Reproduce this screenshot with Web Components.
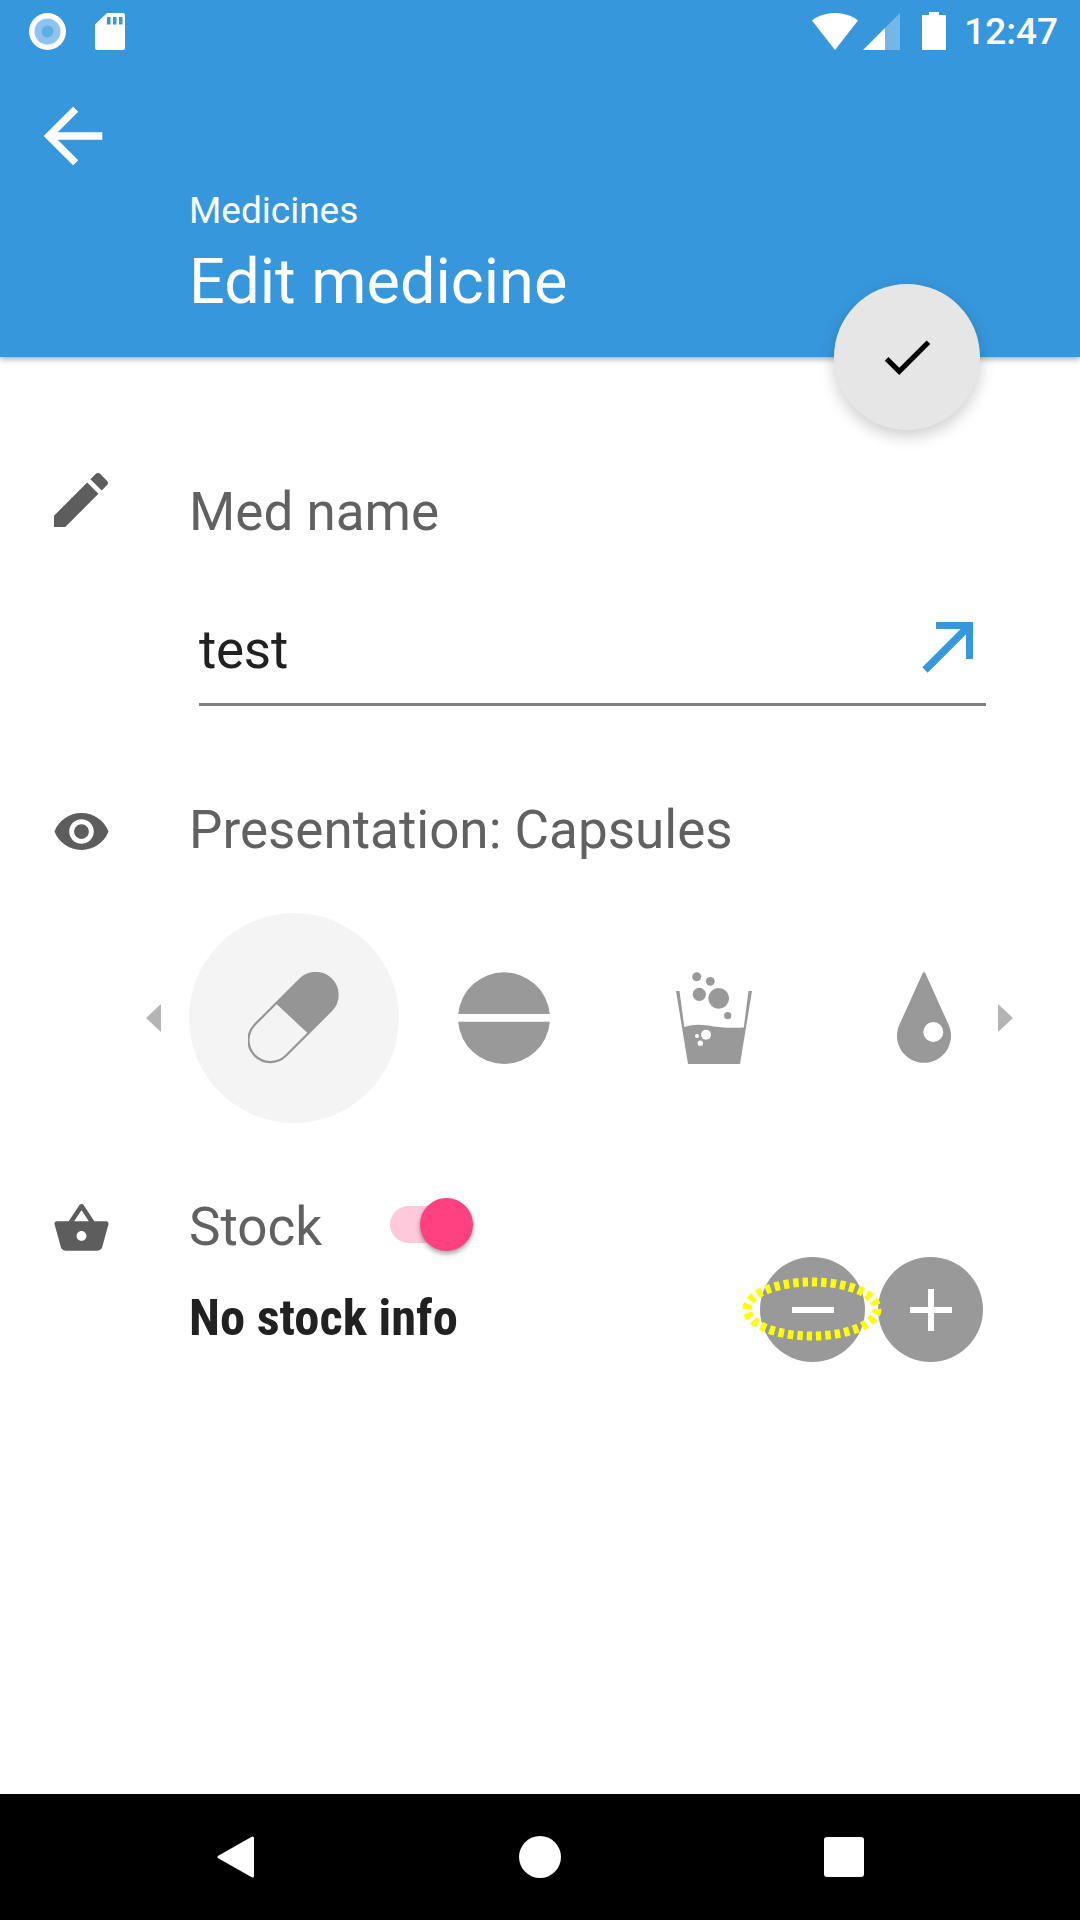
<!DOCTYPE html>
<html>
<head>
<meta charset="utf-8">
<style>
  html, body { margin: 0; padding: 0; background: #fff; }
  body { font-family: Roboto, "Liberation Sans", sans-serif; }
</style>
</head>
<body>
<edit-medicine-page></edit-medicine-page>
<script>
class statusBar extends HTMLElement {
    constructor() {
        super();
        this.attachShadow({mode: 'open'});
    }
    connectedCallback() {
        this.shadowRoot.innerHTML = `
        <style>
            :host { display: flex; height: 72px; box-sizing: border-box; padding: 12px 22px 0 29px; color: #fff; }
            svg { display: block; flex: none; }
            .sd { margin-left: 29px; margin-top: 1px; }
            .right { margin-left: auto; display: flex; }
            .signal { margin-left: 5px; margin-top: 1px; }
            .battery { margin-left: 22.500px; }
            .wifi { margin-top: 1px; }
            .time { margin-left: 18px; font: 500 37px/42px Roboto, sans-serif; margin-top: -1px; }
            .rec { margin-top: 1px; }
        </style>
        <svg class="rec" width="37" height="37" viewBox="0 0 37 37">
            <circle cx="18.500" cy="18.500" r="18.500" fill="#fff"/>
            <circle cx="18.500" cy="18.500" r="13" fill="#8dc3ee"/>
            <circle cx="18.500" cy="18.500" r="6" fill="#62ade6"/>
        </svg>
        <svg class="sd" width="30" height="37" viewBox="0 0 30 37">
            <path fill="#fff" d="M12 0h15.500a2.500 2.500 0 0 1 2.500 2.500v32a2.500 2.500 0 0 1-2.500 2.500h-25a2.500 2.500 0 0 1-2.500-2.500v-23z"/>
            <path fill="#3797dc" d="M12 4h3.500v7.500h-3.500zM18 4h3.500v7.500h-3.500zM24 4h3.500v7.500h-3.500z"/>
        </svg>
        <div class="right">
            <svg class="wifi" width="46" height="37" viewBox="0 0 46 37">
                <path fill="#fff" d="M23 37L0 7.500C6 2.800 14 0 23 0s17 2.800 23 7.500z"/>
            </svg>
            <svg class="signal" width="37" height="37" viewBox="0 0 37 37">
                <path fill="#75b6e8" d="M37 0v37H22V15z"/>
                <path fill="#fff" d="M22 15v22H0z"/>
            </svg>
            <svg class="battery" width="24" height="38" viewBox="0 0 24 38">
                <path fill="#fff" d="M7 0h10v3h7v35H0V3h7z"/>
            </svg>
            <div class="time">12:47</div>
        </div>
        `;
    }
}
customElements.define("status-bar", statusBar);

class appHeader extends HTMLElement {
    constructor() {
        super();
        this.attachShadow({mode: 'open'});
    }
    connectedCallback() {
        this.shadowRoot.innerHTML = `
        <style>
            :host {
                display: block;
                position: relative;
                height: 357px;
                background: #3797dc;
                color: #fff;
                box-shadow: 0 2px 6px rgba(0,0,0,.35);
                z-index: 1;
            }
            .back { display: block; margin: 20px 0 0 29px; }
            .titles { padding-left: 189px; margin-top: 10px; }
            .sub { font-size: 37px; line-height: 42px; }
            .title { font-size: 63px; line-height: 76px; margin-top: 12px; }
            .fab {
                position: absolute;
                left: 834px;
                top: 284px;
                width: 146px;
                height: 146px;
                border-radius: 50%;
                background: #e6e6e6;
                display: flex;
                align-items: center;
                justify-content: center;
                box-shadow: 0 6px 16px rgba(0,0,0,.2);
            }
        </style>
        <status-bar></status-bar>
        <svg class="back" width="88" height="88" viewBox="0 0 24 24">
            <path fill="#fff" d="M20 11H7.830l5.590-5.590L12 4l-8 8 8 8 1.410-1.410L7.830 13H20v-2z"/>
        </svg>
        <div class="titles">
            <div class="sub">Medicines</div>
            <div class="title">Edit medicine</div>
        </div>
        <div class="fab">
            <svg width="62" height="62" viewBox="0 0 24 24">
                <path fill="#000" d="M9 16.170L4.830 12l-1.420 1.410L9 19 21 7l-1.410-1.410z"/>
            </svg>
        </div>
        `;
    }
}
customElements.define("app-header", appHeader);

// one row of the form: icon on the left, label text in the slot
class formRow extends HTMLElement {
    constructor() {
        super();
        this.attachShadow({mode: 'open'});
    }
    connectedCallback() {
        this.shadowRoot.innerHTML = `
        <style>
            :host { display: flex; align-items: flex-start; height: 64px; }
            .icon { width: 72px; flex: none; margin-left: 45px; margin-right: 72px; display: flex; justify-content: center; }
            .label { font-size: 53px; line-height: 64px; color: #616161; display: flex; align-items: flex-start; }
            ::slotted(svg) { display: block; flex: none; }
        </style>
        <div class="icon"><slot name="icon"></slot></div>
        <div class="label"><slot></slot></div>
        `;
    }
}
customElements.define("form-row", formRow);

class nameField extends HTMLElement {
    constructor() {
        super();
        this.attachShadow({mode: 'open'});
    }
    connectedCallback() {
        this.shadowRoot.innerHTML = `
        <style>
            :host {
                display: flex;
                justify-content: space-between;
                margin: 74px 94px 0 199px;
                padding: 0 13px 21px 0;
                border-bottom: 3px solid #808080;
                color: #212121;
                font-size: 53px;
                letter-spacing: -.3px;
                line-height: 64px;
            }
            svg { display: block; margin-top: 4px; }
        </style>
        <div>test</div>
        <svg width="51" height="51" viewBox="922 622 51 51">
            <path fill="none" stroke="#3797dc" stroke-width="7" d="M936 625.500H969.500V659"/>
            <path fill="none" stroke="#3797dc" stroke-width="7.500" d="M968 627L925 670"/>
        </svg>
        `;
    }
}
customElements.define("name-field", nameField);

class presentationPicker extends HTMLElement {
    constructor() {
        super();
        this.attachShadow({mode: 'open'});
    }
    connectedCallback() {
        this.shadowRoot.innerHTML = `
        <style>
            :host { display: flex; position: relative; margin-top: 51px; padding-left: 189px; height: 210px; }
            .item { width: 210px; height: 210px; flex: none; display: flex; align-items: center; justify-content: center; border-radius: 50%; }
            .selected { background: #f4f4f4; }
            svg { display: block; }
            .chev { position: absolute; top: 91px; }
            .prev { left: 146px; }
            .next { left: 998px; }
        </style>
        <svg class="chev prev" width="15" height="28" viewBox="0 0 15 28"><path fill="#b4b4b4" d="M15 0V28L0 14z"/></svg>
        <div class="item selected">
            <svg width="92" height="92" viewBox="0 0 92 92">
                <path fill="none" stroke="#959595" stroke-width="2.200" d="M52.450 6.950L6.450 52.950A22 22 0 0 0 37.550 84.050L83.550 38.050A22 22 0 0 0 52.450 6.950Z"/>
                <path fill="#959595" d="M28 31.400L52.450 6.950A22 22 0 0 1 83.550 38.050L60 61.600Z"/>
            </svg>
        </div>
        <div class="item">
            <svg width="92" height="92" viewBox="0 0 92 92">
                <path fill="#999" d="M.2 42A46 46 0 0 1 91.800 42ZM91.850 49.700A46 46 0 0 1 .15 49.700Z"/>
            </svg>
        </div>
        <div class="item">
            <svg width="76" height="92" viewBox="676 972 76 92">
                <g fill="#999">
                    <circle cx="696.700" cy="976.700" r="4.500"/>
                    <circle cx="710.300" cy="981.300" r="4.400"/>
                    <circle cx="699.300" cy="994.300" r="6.600"/>
                    <circle cx="718.700" cy="998.300" r="10.400"/>
                    <circle cx="727.700" cy="1015.700" r="3.600"/>
                    <path d="M676 991H679.500L684.300 1027C695 1023.500 703 1024.500 714 1026.500C724 1028 734 1028 743.800 1027.500L748.500 991H752L740 1064H688Z"/>
                </g>
                <g fill="#fff">
                    <circle cx="706" cy="1034.700" r="5"/>
                    <circle cx="697" cy="1036" r="2"/>
                    <circle cx="700.300" cy="1043.300" r="2.700"/>
                </g>
            </svg>
        </div>
        <div class="item">
            <svg width="54" height="92" viewBox="897 972 54 92">
                <path fill="#999" fill-rule="evenodd" d="M922.500 973.500Q924 971 925.500 973.500L948.500 1024.500A27 27 0 1 1 899.500 1024.500ZM933.300 1022A10 10 0 1 0 933.300 1042A10 10 0 1 0 933.300 1022Z"/>
            </svg>
        </div>
        <svg class="chev next" width="15" height="28" viewBox="0 0 15 28"><path fill="#b4b4b4" d="M0 0V28L15 14z"/></svg>
        `;
    }
}
customElements.define("presentation-picker", presentationPicker);

class stockSwitch extends HTMLElement {
    constructor() {
        super();
        this.attachShadow({mode: 'open'});
    }
    connectedCallback() {
        this.shadowRoot.innerHTML = `
        <style>
            :host { display: block; position: relative; width: 70px; height: 37px; margin-top: 11px; border-radius: 19px; background: #ffc9dc; }
            .thumb {
                position: absolute;
                left: 30px;
                top: -8px;
                width: 53px;
                height: 53px;
                border-radius: 50%;
                background: #ff4081;
                box-shadow: 0 3px 5px rgba(0,0,0,.35);
            }
        </style>
        <div class="thumb"></div>
        `;
    }
}
customElements.define("stock-switch", stockSwitch);

class stockInfo extends HTMLElement {
    constructor() {
        super();
        this.attachShadow({mode: 'open'});
    }
    connectedCallback() {
        this.shadowRoot.innerHTML = `
        <style>
            :host { display: flex; justify-content: space-between; padding: 0 97px 0 189px; margin-top: -2px; }
            .info {
                font-weight: 700;
                font-size: 50.500px;
                line-height: 64px;
                color: #212121;
                margin-top: 29px;
                font-stretch: condensed;
                white-space: nowrap;
            }
            .buttons { display: flex; gap: 13px; position: relative; }
            .btn { width: 105px; height: 105px; border-radius: 50%; background: #999; display: flex; align-items: center; justify-content: center; }
            .btn svg { display: block; }
            .focus { position: absolute; left: -18px; top: 20px; pointer-events: none; }
        </style>
        <div class="info">No stock info</div>
        <div class="buttons">
            <div class="btn"><svg width="42" height="42" viewBox="0 0 42 42"><path fill="#fff" d="M0 18h42v6H0z"/></svg></div>
            <div class="btn"><svg width="42" height="42" viewBox="0 0 42 42"><path fill="#fff" d="M0 18h42v6H0zM18 0h6v42h-6z"/></svg></div>
            <svg class="focus" width="140" height="64" viewBox="0 0 140 64">
                <ellipse cx="70" cy="32" rx="65" ry="27" fill="none" stroke="#ffff00" stroke-width="9" stroke-dasharray="5.400 4"/>
            </svg>
        </div>
        `;
    }
}
customElements.define("stock-info", stockInfo);

class navBar extends HTMLElement {
    constructor() {
        super();
        this.attachShadow({mode: 'open'});
    }
    connectedCallback() {
        this.shadowRoot.innerHTML = `
        <style>
            :host { display: flex; align-items: center; justify-content: space-between; height: 126px; padding: 0 216px 0 217px; background: #000; }
            svg { display: block; }
        </style>
        <svg width="38" height="42" viewBox="0 0 38 42"><path fill="#fff" stroke="#fff" stroke-width="3" stroke-linejoin="round" d="M35.500 2V40L2 21z"/></svg>
        <svg width="42" height="42" viewBox="0 0 42 42"><circle cx="21" cy="21" r="21" fill="#fff"/></svg>
        <svg width="40" height="40" viewBox="0 0 40 40"><rect width="40" height="40" rx="3" fill="#fff"/></svg>
        `;
    }
}
customElements.define("nav-bar", navBar);

class editMedicinePage extends HTMLElement {
    constructor() {
        super();
        this.attachShadow({mode: 'open'});
    }
    connectedCallback() {
        this.shadowRoot.innerHTML = `
        <style>
            :host { display: flex; flex-direction: column; width: 1080px; height: 1920px; overflow: hidden; background: #fff; }
            main { flex: 1; padding-top: 123px; }
            .presentation { margin-top: 92px; }
            .stock { margin-top: 72px; }
        </style>
        <app-header></app-header>
        <main>
            <form-row>
                <svg slot="icon" width="72" height="72" viewBox="0 0 24 24" style="margin-top:-16px">
                    <path fill="#5d5d5d" d="M3 17.250V21h3.750L17.810 9.940l-3.750-3.750L3 17.250zM20.710 7.040c.39-.39.39-1.020 0-1.410l-2.340-2.340c-.39-.39-1.020-.39-1.410 0l-1.830 1.830 3.750 3.750 1.830-1.830z"/>
                </svg>
                Med name
            </form-row>
            <name-field></name-field>
            <form-row class="presentation">
                <svg slot="icon" width="59" height="59" viewBox="0 0 24 24" style="margin-top:4px">
                    <path fill="#5d5d5d" d="M12 4.500C7 4.500 2.730 7.610 1 12c1.730 4.390 6 7.500 11 7.500s9.270-3.110 11-7.500c-1.730-4.390-6-7.500-11-7.500zM12 17c-2.760 0-5-2.240-5-5s2.240-5 5-5 5 2.240 5 5-2.240 5-5 5zm0-8c-1.660 0-3 1.340-3 3s1.340 3 3 3 3-1.340 3-3-1.340-3-3-3z"/>
                </svg>
                Presentation: Capsules
            </form-row>
            <presentation-picker></presentation-picker>
            <form-row class="stock">
                <svg slot="icon" width="59" height="59" viewBox="0 0 24 24" style="margin-top:4px">
                    <path fill="#5d5d5d" d="M17.210 9l-4.380-6.560c-.19-.28-.51-.42-.83-.42-.32 0-.64.14-.83.43L6.790 9H2c-.55 0-1 .45-1 1 0 .09.01.18.04.27l2.540 9.270c.23.84 1 1.460 1.920 1.460h13c.92 0 1.690-.62 1.930-1.460l2.540-9.270L23 10c0-.55-.45-1-1-1h-4.790zM9 9l3-4.400L15 9H9zm3 8c-1.100 0-2-.9-2-2s.9-2 2-2 2 .9 2 2-.9 2-2 2z"/>
                </svg>
                Stock
                <stock-switch style="margin-left:68px"></stock-switch>
            </form-row>
            <stock-info></stock-info>
        </main>
        <nav-bar></nav-bar>
        `;
    }
}
customElements.define("edit-medicine-page", editMedicinePage);
</script>
</body>
</html>
